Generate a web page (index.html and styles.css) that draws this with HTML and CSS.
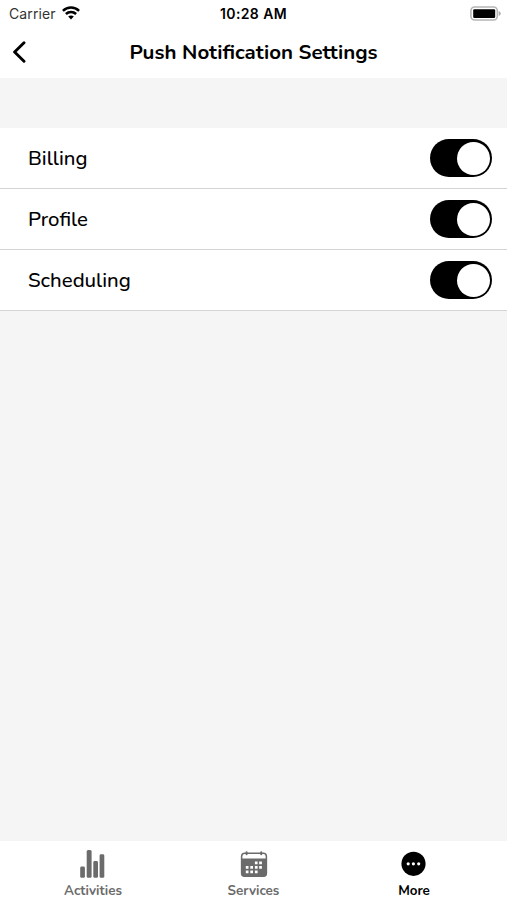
FILE: index.html
```html
<!DOCTYPE html>
<html lang="en">
<head>
    <meta charset="UTF-8">
    <meta name="viewport" content="width=device-width, initial-scale=1">
    <title>Push Notification Settings</title>
    <link rel="stylesheet" href="styles.css">
</head>
<body>
    <header class="top">
        <div class="status-bar">
            <div class="carrier">
                <span class="carrier-name">Carrier</span>
                <svg class="wifi" width="18" height="14" viewBox="0 0 18 14" fill="none" stroke="#000" stroke-width="2.5">
                    <path d="M.9 4.9C5.5.5 12.5.5 17.1 4.9"/>
                    <path d="M3.9 8C6.8 5.2 11.2 5.2 14.1 8"/>
                    <path d="M6.2 10.6C7.7 9 10.3 9 11.8 10.6L9 13.6Z" fill="#000" stroke="none"/>
                </svg>
            </div>
            <span class="time">10:28 AM</span>
            <svg class="battery" width="31" height="15" viewBox="0 0 31 15">
                <rect x=".9" y="1" width="26.4" height="13" rx="3.8" fill="#fff" stroke="#b5b5b5" stroke-width="1.6"/>
                <rect x="3.2" y="3.2" width="22" height="8.8" rx="1.2"/>
                <path d="M28.7 5v5q2-.8 2-2.5t-2-2.5z" fill="#aaa"/>
            </svg>
        </div>
        <div class="nav-bar">
            <button class="back" aria-label="Back">
                <svg width="14" height="22" viewBox="0 0 14 22" fill="none" stroke="#000" stroke-width="2.9" stroke-linecap="round" stroke-linejoin="round">
                    <path d="M12 1.8L2.6 11l9.4 9.2"/>
                </svg>
            </button>
            <h1 class="title">Push Notification Settings</h1>
        </div>
    </header>

    <main class="content">
        <ul class="settings">
            <li class="row">
                <span class="label">Billing</span>
                <button class="switch" role="switch" aria-checked="true" aria-label="Billing"><span class="knob"></span></button>
            </li>
            <li class="row">
                <span class="label">Profile</span>
                <button class="switch" role="switch" aria-checked="true" aria-label="Profile"><span class="knob"></span></button>
            </li>
            <li class="row">
                <span class="label">Scheduling</span>
                <button class="switch" role="switch" aria-checked="true" aria-label="Scheduling"><span class="knob"></span></button>
            </li>
        </ul>
    </main>

    <nav class="tabs">
        <a class="tab">
            <svg class="tab-icon" width="28" height="28" viewBox="0 0 28 28" fill="#6b6b6b">
                <rect x="1.2" y="16.5" width="4.7" height="11.3" rx="1.4"/>
                <rect x="7.7" y="0" width="4.9" height="27.8" rx="1.5"/>
                <rect x="14.3" y="11" width="4.7" height="16.8" rx="1.4"/>
                <rect x="20.6" y="4.3" width="4.7" height="23.5" rx="1.4"/>
            </svg>
            <span class="tab-name">Activities</span>
        </a>
        <a class="tab">
            <svg class="tab-icon" width="28" height="28" viewBox="0 0 28 28">
                <rect x="1.6" y="3.3" width="24.8" height="22.9" rx="3.2" fill="none" stroke="#6b6b6b" stroke-width="1.5"/>
                <path d="M1 8.6h26v14.5a3.8 3.8 0 0 1-3.8 3.8H4.8A3.8 3.8 0 0 1 1 23.1z" fill="#6b6b6b"/>
                <path d="M6.6 2.2v2M21.2 2.2v2" stroke="#6b6b6b" stroke-width="2" stroke-linecap="round"/>
                <path d="M14.9 12.8h2.7M19.2 12.8h2.7M5.8 17.3h2.7M10.3 17.3h2.7M14.9 17.3h2.7M19.2 17.3h2.7M5.8 21.8h2.7M10.3 21.8h2.7M14.9 21.8h2.7" stroke="#fff" stroke-width="2.7"/>
            </svg>
            <span class="tab-name">Services</span>
        </a>
        <a class="tab active">
            <svg class="tab-icon" width="28" height="28" viewBox="0 0 28 28">
                <circle cx="13.5" cy="13.8" r="12.1"/>
                <g fill="#fff">
                    <circle cx="8.2" cy="13.8" r="1.6"/>
                    <circle cx="13.4" cy="13.8" r="1.6"/>
                    <circle cx="18.7" cy="13.8" r="1.6"/>
                </g>
            </svg>
            <span class="tab-name">More</span>
        </a>
    </nav>
</body>
</html>
```
FILE: styles.css
```css
* {
    box-sizing: border-box;
}

body {
    margin: 0;
    height: 100vh;
    display: flex;
    flex-direction: column;
    background: #f5f5f5;
    color: #000;
    font-family: "Nunito", "Noto Sans", sans-serif;
}

button {
    border: 0;
    padding: 0;
    background: none;
}

.top {
    height: 78px;
    background: #fff;
}

.status-bar {
    display: grid;
    grid-template-columns: 1fr auto 1fr;
    align-items: center;
    height: 27px;
    padding: 0 6px;
    font-family: "Inter", sans-serif;
    font-size: 14px;
    line-height: 27px;
}

.carrier {
    display: flex;
    align-items: center;
    gap: 6px;
    padding-left: 3px;
    color: #333;
}

.carrier-name {
    letter-spacing: 0.1px;
}

.wifi {
    margin-top: -2px;
}

.time {
    font-weight: 600;
    letter-spacing: 0.4px;
}

.battery {
    justify-self: end;
}

.nav-bar {
    display: grid;
    grid-template-columns: 40px 1fr 40px;
    align-items: center;
    height: 50px;
}

.back {
    display: flex;
    padding-left: 12px;
}

.title {
    margin: 0;
    text-align: center;
    font-size: 20.5px;
    font-weight: 700;
    white-space: nowrap;
}

.content {
    flex: 1;
    padding-top: 50px;
}

.settings {
    margin: 0;
    padding: 0;
    list-style: none;
    background: #fff;
}

.row {
    display: flex;
    align-items: center;
    justify-content: space-between;
    height: 61px;
    padding: 0 15px 0 28px;
    border-bottom: 1px solid #d4d4d4;
}

.label {
    font-size: 20.4px;
    font-weight: 500;
}

.switch {
    display: flex;
    align-items: center;
    justify-content: flex-end;
    width: 62px;
    height: 38px;
    padding-right: 2px;
    border-radius: 19px;
    background: #000;
}

.knob {
    width: 33px;
    height: 33px;
    border-radius: 50%;
    background: #fff;
}

.tabs {
    display: flex;
    justify-content: center;
    height: 59px;
    background: #fff;
}

.tab {
    display: flex;
    flex-direction: column;
    align-items: center;
    width: 160.5px;
    padding-top: 9px;
    color: #6b6b6b;
}

.tab-icon {
    flex-shrink: 0;
}

.tab-name {
    font-size: 13.4px;
    font-weight: 700;
    line-height: 22px;
    margin-top: 2px;
}

.active {
    color: #000;
}
```
